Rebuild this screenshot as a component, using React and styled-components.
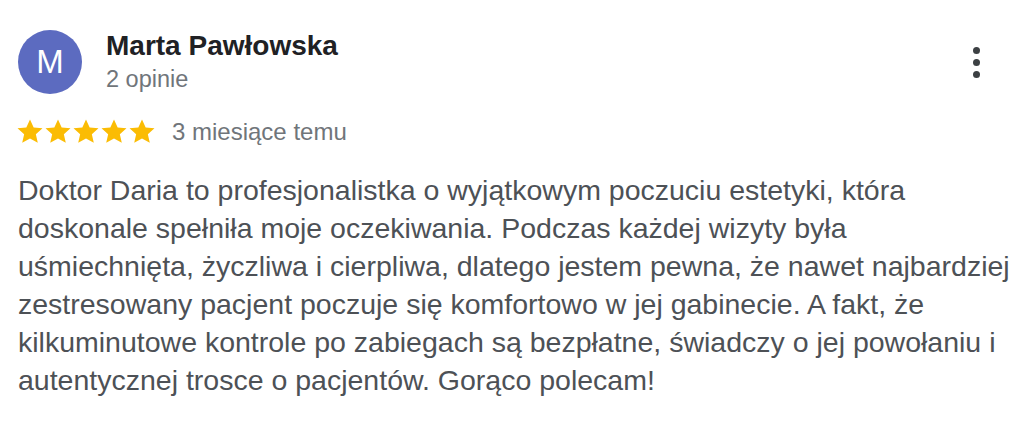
import React from "react";
import styled, { createGlobalStyle } from "styled-components";

const Global = createGlobalStyle`
  html, body { margin: 0; padding: 0; background: #fff; }
  body { font-family: "Liberation Sans", Arial, sans-serif; }
`;

const Card = styled.div`
  width: 1014px;
  box-sizing: border-box;
  padding: 30px 4px 0 18px;
  display: flex;
  flex-direction: column;
  font-family: "Liberation Sans", Arial, sans-serif;
`;

const Header = styled.div`
  display: flex;
  align-items: flex-start;
`;

const Avatar = styled.div`
  width: 64px;
  height: 64px;
  border-radius: 50%;
  background: #5c6bc0;
  color: #fff;
  font-size: 33px;
  display: flex;
  align-items: center;
  justify-content: center;
  flex-shrink: 0;
`;

const Info = styled.div`
  margin-left: 24px;
  display: flex;
  flex-direction: column;
  flex: 1;
`;

const Name = styled.div`
  font-size: 28px;
  font-weight: bold;
  color: #202124;
  line-height: 32px;
`;

const Sub = styled.div`
  font-size: 23.5px;
  color: #70757a;
  line-height: 28px;
  margin-top: 3px;
`;

const More = styled.button`
  border: none;
  background: none;
  padding: 0;
  margin: 17px 27px 0 0;
  width: 14px;
  display: flex;
  flex-direction: column;
  align-items: center;
  gap: 5px;
  cursor: pointer;
`;

const Dot = styled.span`
  width: 7px;
  height: 7px;
  border-radius: 50%;
  background: #3c4043;
`;

const RatingRow = styled.div`
  display: flex;
  align-items: center;
  margin-top: 23.5px;
`;

const Stars = styled.div`
  display: flex;
  margin-left: -2px;
`;

const When = styled.span`
  margin-left: 16px;
  font-size: 24px;
  color: #70757a;
`;

const Body = styled.p`
  margin: 25px 0 0 0;
  font-size: 28.5px;
  line-height: 38px;
  color: #4d5156;
`;

const Star = () => (
  <svg width="28" height="27.5" viewBox="0 0 24 24">
    <path
      fill="#fbbc04"
      d="M12 1.2l3.2 7.1 7.7.7-5.8 5.1 1.7 7.6L12 17.8l-6.8 3.9 1.7-7.6L1.1 9l7.7-.7z"
    />
  </svg>
);

export default function App() {
  return (
    <>
      <Global />
      <Card>
        <Header>
          <Avatar>M</Avatar>
          <Info>
            <Name>Marta Pawłowska</Name>
            <Sub>2 opinie</Sub>
          </Info>
          <More aria-label="Więcej">
            <Dot />
            <Dot />
            <Dot />
          </More>
        </Header>
        <RatingRow>
          <Stars>
            {[0, 1, 2, 3, 4].map((i) => (
              <Star key={i} />
            ))}
          </Stars>
          <When>3 miesiące temu</When>
        </RatingRow>
        <Body>
          Doktor Daria to profesjonalistka o wyjątkowym poczuciu estetyki, która
          doskonale spełniła moje oczekiwania. Podczas każdej wizyty była
          uśmiechnięta, życzliwa i cierpliwa, dlatego jestem pewna, że nawet
          najbardziej zestresowany pacjent poczuje się komfortowo w jej gabinecie.
          A fakt, że kilkuminutowe kontrole po zabiegach są bezpłatne, świadczy o
          jej powołaniu i autentycznej trosce o pacjentów. Gorąco polecam!
        </Body>
      </Card>
    </>
  );
}
